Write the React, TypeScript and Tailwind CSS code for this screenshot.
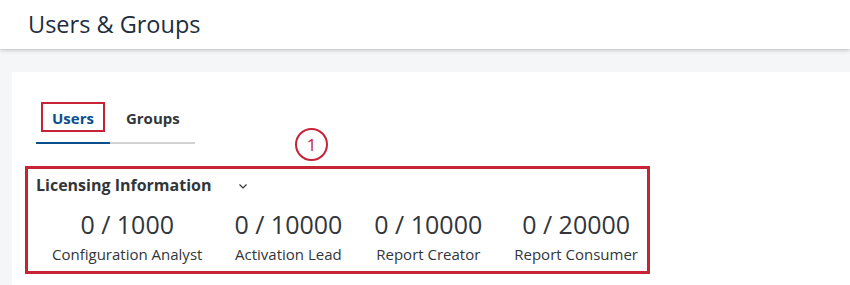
import React from "react";

const stats = [
  { value: "0 / 1000", label: "Configuration Analyst" },
  { value: "0 / 10000", label: "Activation Lead" },
  { value: "0 / 10000", label: "Report Creator" },
  { value: "0 / 20000", label: "Report Consumer" },
];

export default function App() {
  return (
    <div
      className="w-[850px] h-[285px] overflow-hidden bg-[#f5f6f7] flex flex-col"
      style={{ fontFamily: '"Open Sans", "Liberation Sans", Arial, sans-serif' }}
    >
      <header className="h-[49px] shrink-0 bg-white shadow-[0_1px_4px_rgba(0,0,0,0.25)] relative z-10 flex items-center pl-[28px]">
        <h1 className="text-[23.5px] text-[#1d2d3e] leading-none">Users &amp; Groups</h1>
      </header>
      <div className="flex-1 pt-[23px] pl-[12px]">
        <div className="bg-white h-full pt-[33px] pl-[13px]">
          <div className="flex pl-[11px]">
            <div className="flex flex-col">
              <div className="flex items-end h-[39px]">
                <div className="flex flex-col">
                  <div className="flex items-center gap-[21px]">
                    <div className="border-2 border-[#c62336] px-[9px] h-[30px] flex items-center ml-[5px] pt-[2px]">
                      <span className="text-[15px] font-bold text-[#0a4e8c]">Users</span>
                    </div>
                    <span className="text-[15px] font-bold text-[#32363a] pt-[2px]">Groups</span>
                  </div>
                  <div className="flex mt-[10px]">
                    <div className="w-[74px] h-[2px] bg-[#0a4e8c]" />
                    <div className="w-[85px] h-[2px] bg-[#d1d1d1]" />
                  </div>
                </div>
              </div>
            </div>
            <div className="ml-[100px] mt-[23px]">
              <div className="w-[33px] h-[33px] rounded-full border-2 border-[#c62336] flex items-center justify-center text-[#c62336] text-[17px] leading-none">
                1
              </div>
            </div>
          </div>
          <div className="w-[625px] h-[108px] border-[3px] border-[#c62336] mt-[5px] pt-[4px] pl-[8px]">
            <div className="flex items-center">
              <span className="text-[16px] font-bold text-[#32363a]">Licensing Information</span>
              <svg className="ml-[27px] mt-[1px]" width="10" height="8" viewBox="0 0 10 8" fill="none">
                <path d="M1.5 2.5 L5 6 L8.5 2.5" stroke="#32363a" strokeWidth="1.2" />
              </svg>
            </div>
            <div className="flex gap-[32px] pl-[16px] mt-[12px]">
              {stats.map((s, i) => (
                <div key={i} className="flex flex-col items-center">
                  <span className="text-[25px] text-[#32363a] leading-[30px]">{s.value}</span>
                  <span className="text-[15px] text-[#32363a] leading-[20px] mt-[5px]">{s.label}</span>
                </div>
              ))}
            </div>
          </div>
        </div>
      </div>
    </div>
  );
}
